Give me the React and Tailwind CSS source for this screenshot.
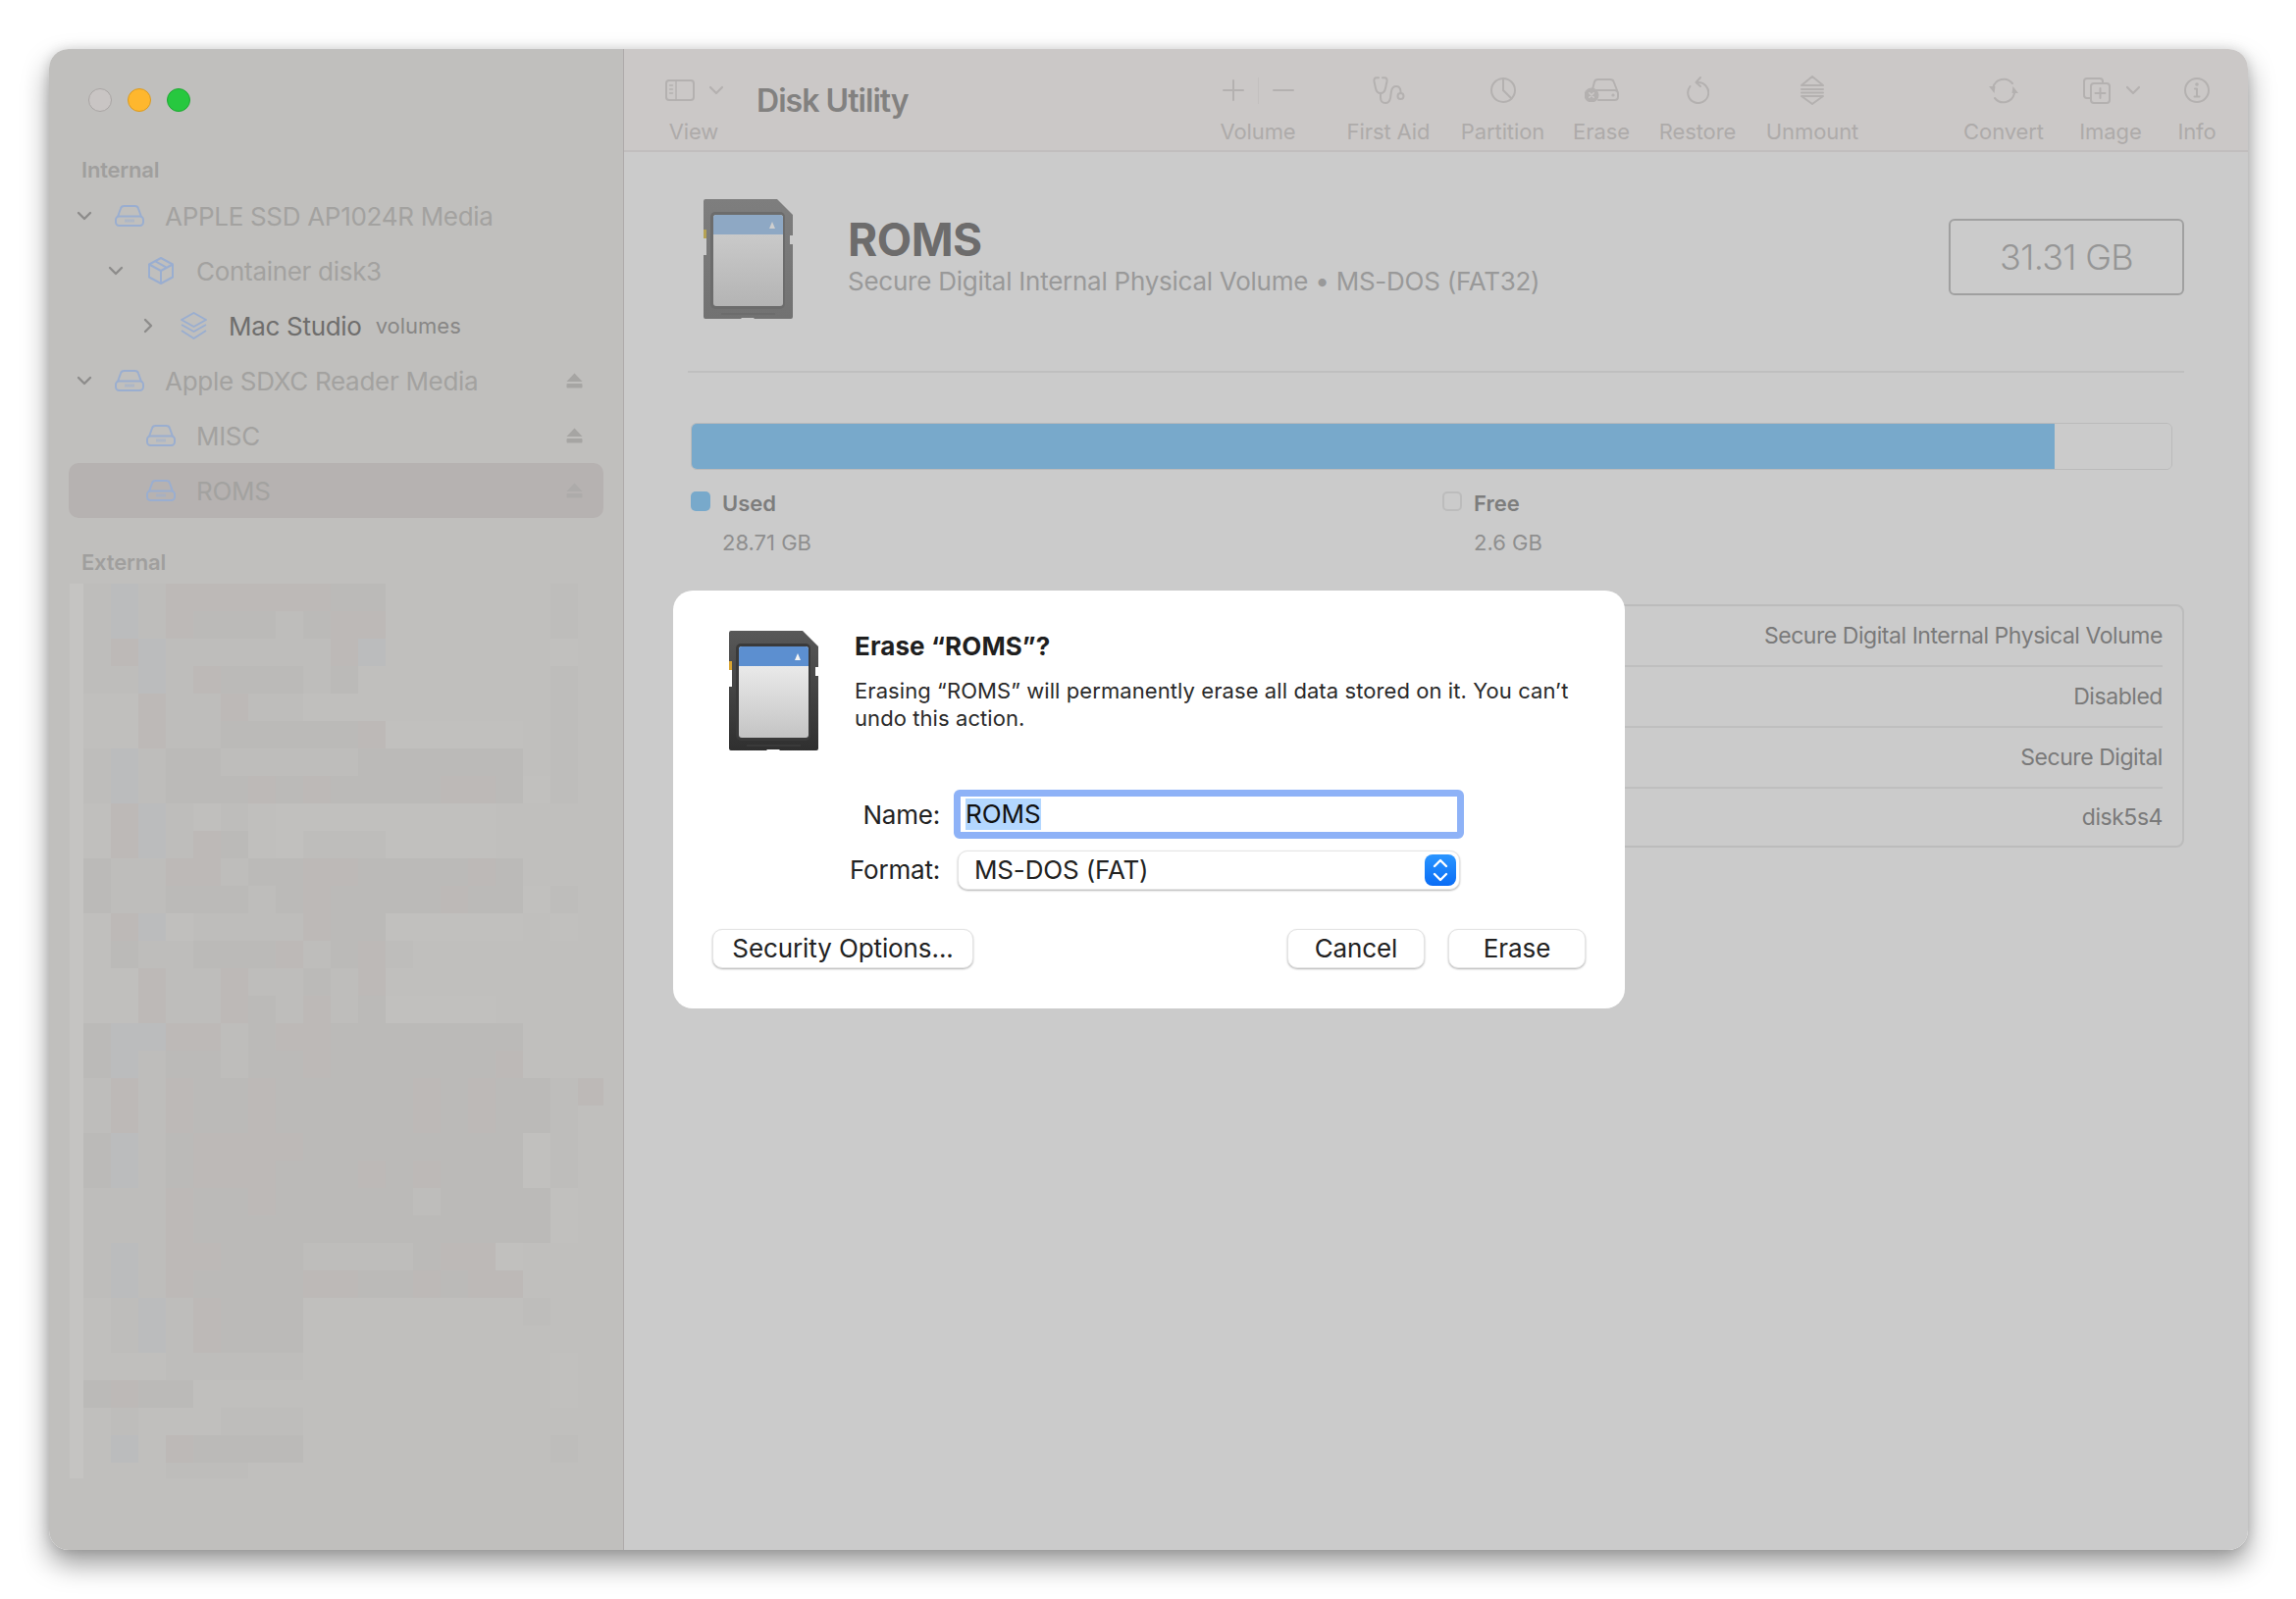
import React from 'react';

const shades = {
  '.': 'bg-[#c0bfbd]',
  d: 'bg-[#bebdbb]',
  D: 'bg-[#bbbab8]',
  p: 'bg-[#bdb9b7]',
  b: 'bg-[#bbbcbd]',
  l: 'bg-[#c1c0be]',
};

// blurred "External" list, one string per row
const mosaic = [
  'dbdppppppDD......d.',
  'dbdpDDDdDpp......d.',
  'dpbddddddpb......l.',
  'ddbdpDDDdD.......d.',
  '..pddpdd.........d.',
  '..pddDDDDDplllll.d.',
  'dbdDDdddddDDDDDD.d.',
  'dbdDDDpDpDDDDppDld.',
  '.pbd.d.llllllll....',
  '.pbdpD.ldddllll....',
  'DddppdDDppDDDDpD...',
  'DddDDDdDpDDDDpDDld.',
  '.pb.ddddpDDlllll.l.',
  '.DddDDDpdDpd.......',
  '..pddpddDdp........',
  '..pddpDdpdDllll....',
  'DbbppdDppDDDDDDD...',
  'DbdDDdDDpDDDDDDp...',
  'dpdpDDpDDDDDpDpDDdp',
  'dpdpDDpDDDDDpDpDDd.',
  'DbdDppppDDDDDDDDld.',
  'DbdDpppDDDpDpDDDld.',
  'dddpDDpDDDDDdDDDDl.',
  'dddpDDDDDDDDDDDDDl.',
  'dbdppDDDddddDppl...',
  'dbdpDDDDppDDpDpp...',
  '.dbdpDDD........d..',
  '.dbdpDDD...........',
  '...ddddd.........l.',
  'DpDD.............l.',
  '.d...ddd...........',
  '.b.pDDDD.........d.',
  '...ddd.............',
];

const Chevron = ({ open }) => (
  <svg width="16" height="16" viewBox="0 0 16 16" fill="none" stroke="#8d8c8b" strokeWidth="2.4" strokeLinecap="round" strokeLinejoin="round">
    {open ? <path d="M2 5l6 6 6-6" /> : <path d="M5 2l6 6-6 6" />}
  </svg>
);

const DriveIcon = () => (
  <svg width="30" height="22" viewBox="0 0 30 22" fill="none" stroke="#9aaed0" strokeWidth="2">
    <path d="M3 12L6 3.5Q6.7 1 9.5 1H20.5Q23.3 1 24 3.5L27 12" />
    <rect x="1" y="11.5" width="28" height="9.5" rx="3.5" />
    <path d="M11 14.5v3M13 14.5v3M15 14.5v3M17 14.5v3M19 14.5v3" strokeWidth="1" />
  </svg>
);

const CubeIcon = () => (
  <svg width="26" height="28" viewBox="0 0 26 28" fill="none" stroke="#9aaed0" strokeWidth="2" strokeLinejoin="round">
    <path d="M13 1L25 7.5V20.5L13 27L1 20.5V7.5Z" />
    <path d="M1 7.5L13 14L25 7.5M13 14V27M7 4.2L19 10.8" />
  </svg>
);

const LayersIcon = () => (
  <svg width="27" height="28" viewBox="0 0 27 28" fill="none" stroke="#9aaed0" strokeWidth="2" strokeLinejoin="round">
    <path d="M13.5 1L26 8L13.5 15L1 8Z" />
    <path d="M1 13L13.5 20L26 13" />
    <path d="M1 19L13.5 27L26 19" />
  </svg>
);

const EjectIcon = ({ dim }) => (
  <svg width="17" height="16" viewBox="0 0 17 16" fill={dim ? '#adabaa' : '#a6a5a3'}>
    <path d="M8.5 0.5L16.5 9H0.5Z" />
    <rect x="0.5" y="11" width="16" height="4.5" rx="1" />
  </svg>
);

const Row = ({ level, chevron, icon, name, extra, eject, selected }) => {
  const indent = ['pl-[8px]', 'pl-[40px]', 'pl-[73px]'][level];
  return (
    <div className={`flex items-center h-[56px] rounded-[10px] ${indent} ${selected ? 'bg-[#b6b2b1]' : ''}`}>
      <div className="w-[39px] flex">{chevron && <Chevron open={chevron === 'open'} />}</div>
      <div className="w-[30px] mr-[21px] flex justify-center">{icon}</div>
      <span className={`text-[26px] tracking-[-0.3px] ${extra ? 'text-[#6f6e6d]' : 'text-[#a3a2a0]'}`}>{name}</span>
      {extra && <span className="ml-[14px] text-[22px] text-[#888786]">{extra}</span>}
      {eject && (
        <div className="ml-auto mr-[21px] flex">
          <EjectIcon dim={selected} />
        </div>
      )}
    </div>
  );
};

const Sidebar = () => (
  <div className="w-[586px] shrink-0 bg-[#c0bfbd] border-r border-[#aeaaaa] pt-[40px] px-[20px]">
    <div className="flex items-center gap-[16px] pl-[20px] mb-[45px]">
      <div className="w-[24px] h-[24px] rounded-full bg-[#c9c5c4] border border-[#a9a5a4]" />
      <div className="w-[24px] h-[24px] rounded-full bg-[#feb72e] border border-[#d99a22]" />
      <div className="w-[24px] h-[24px] rounded-full bg-[#27c83f] border border-[#1fa833]" />
    </div>
    <div className="h-[28px] leading-[28px] pl-[13px] mb-[5px] text-[22px] font-semibold tracking-[-0.2px] text-[#a09f9e]">Internal</div>
    <Row level={0} chevron="open" icon={<DriveIcon />} name="APPLE SSD AP1024R Media" />
    <Row level={1} chevron="open" icon={<CubeIcon />} name="Container disk3" />
    <Row level={2} chevron="closed" icon={<LayersIcon />} name="Mac Studio" extra="volumes" />
    <Row level={0} chevron="open" icon={<DriveIcon />} name="Apple SDXC Reader Media" eject />
    <Row level={1} icon={<DriveIcon />} name="MISC" eject />
    <Row level={1} icon={<DriveIcon />} name="ROMS" eject selected />
    <div className="h-[28px] leading-[28px] pl-[13px] mt-[31px] mb-[8px] text-[22px] font-semibold tracking-[-0.2px] text-[#a09f9e]">External</div>
    <div className="ml-[1px] h-[912px] overflow-hidden grid grid-cols-[14px_repeat(19,28px)] auto-rows-[28px]">
      {mosaic.map((row, r) => (
        <React.Fragment key={r}>
          <div className="bg-[#c5c4c2]" />
          {row.split('').map((c, i) => (
            <div key={i} className={shades[c]} />
          ))}
        </React.Fragment>
      ))}
    </div>
  </div>
);

const ToolIcon = ({ w, h, vb, children }) => (
  <svg width={w} height={h} viewBox={vb} fill="none" stroke="#b4b1b0" strokeWidth="2" strokeLinecap="round" strokeLinejoin="round">
    {children}
  </svg>
);

const SmallChevron = () => (
  <svg width="16" height="10" viewBox="0 0 16 10" fill="none" stroke="#b4b1b0" strokeWidth="2.2" strokeLinecap="round" strokeLinejoin="round">
    <path d="M2 2l6 6 6-6" />
  </svg>
);

const Tool = ({ width, label, children }) => (
  <div className={`flex flex-col items-center ${width}`}>
    <div className="h-[36px] flex items-center">{children}</div>
    <div className="mt-[10px] h-[28px] leading-[28px] text-[22px] tracking-[-0.1px] text-[#aeabaa]">{label}</div>
  </div>
);

const Toolbar = () => (
  <div className="h-[105px] shrink-0 bg-[#cbc8c7] border-b-2 border-[#c1bebe] flex items-start pt-[24px] pl-[32px] pr-[18px]">
    <Tool width="w-[78px]" label="View">
      <div className="flex items-center gap-[14px] ml-[2px]">
        <ToolIcon w={30} h={22} vb="0 0 30 22">
          <rect x="1" y="1" width="28" height="20" rx="3" />
          <path d="M11 1v20M4.5 6h3M4.5 10h3M4.5 14h3" strokeWidth="1.4" />
        </ToolIcon>
        <SmallChevron />
      </div>
    </Tool>
    <div className="mt-[13px] ml-[25px] text-[32px] leading-[32px] font-semibold tracking-[-0.95px] text-[#828180]">Disk Utility</div>
    <div className="flex-1" />
    <Tool width="w-[132px]" label="Volume">
      <div className="flex items-center gap-[14px]">
        <ToolIcon w={22} h={22} vb="0 0 22 22">
          <path d="M11 1v20M1 11h20" />
        </ToolIcon>
        <div className="w-[1px] h-[27px] bg-[#c3c0bf]" />
        <ToolIcon w={22} h={22} vb="0 0 22 22">
          <path d="M1 11h20" />
        </ToolIcon>
      </div>
    </Tool>
    <Tool width="w-[134px]" label="First Aid">
      <ToolIcon w={33} h={28} vb="0 0 33 28">
        <path d="M6 1.2H4Q1 1.2 1.5 5L3 12Q4 17 8 17Q12 17 13 12L14.5 5Q15 1.2 12 1.2H10" />
        <path d="M8 17V21.5Q8 27 13 27Q17 27 18 22L19 15Q20 10 24 10Q28 10 28.5 15V17" />
        <circle cx="28.5" cy="20" r="3" />
      </ToolIcon>
    </Tool>
    <Tool width="w-[99px]" label="Partition">
      <ToolIcon w={26} h={26} vb="0 0 26 26">
        <circle cx="13" cy="13" r="12" />
        <path d="M13 1V13L21.5 21.5" />
      </ToolIcon>
    </Tool>
    <Tool width="w-[102px]" label="Erase">
      <svg width="35" height="24" viewBox="0 0 35 24" fill="none" stroke="#b4b1b0" strokeWidth="2" strokeLinecap="round" strokeLinejoin="round">
        <path d="M8 11L10 3.5Q10.7 1 13.5 1H26Q29 1 29.7 3.5L33 12" />
        <path d="M12 12H30.5Q34 12 34 15.5V18.5Q34 22 30.5 22H14" />
        <circle cx="29" cy="17" r="0.6" />
        <circle cx="7" cy="17" r="6.5" fill="#b4b1b0" />
        <path d="M4.8 14.8l4.4 4.4M9.2 14.8l-4.4 4.4" stroke="#cbc8c7" strokeWidth="1.6" />
      </svg>
    </Tool>
    <Tool width="w-[94px]" label="Restore">
      <ToolIcon w={23} h={28} vb="0 0 23 28">
        <path d="M11.5 6A10.5 10.5 0 1 1 3.5 10" />
        <path d="M14 1L9.5 6L14 10" />
      </ToolIcon>
    </Tool>
    <Tool width="w-[140px]" label="Unmount">
      <ToolIcon w={24} h={30} vb="0 0 24 30">
        <path d="M12 1L23 10H1Z" />
        <path d="M1 14H23M1 17.5H23" />
        <path d="M1 21H23L12 29Z" />
      </ToolIcon>
    </Tool>
    <div className="w-[70px]" />
    <Tool width="w-[110px]" label="Convert">
      <svg width="32" height="27" viewBox="0 0 32 27" fill="none" stroke="#b4b1b0" strokeWidth="2" strokeLinecap="round">
        <path d="M5 11A11.5 12 0 0 1 25 6" />
        <path d="M27 16A11.5 12 0 0 1 7 21" />
        <path d="M25.5 10L31 17H24.5Z M6.5 17L1 10H7.5Z" transform="translate(0 -1)" fill="#b4b1b0" stroke="none" />
      </svg>
    </Tool>
    <Tool width="w-[108px]" label="Image">
      <div className="flex items-center gap-[15px] ml-[3px]">
        <ToolIcon w={28} h={27} vb="0 0 28 27">
          <rect x="1" y="1" width="19" height="20" rx="3" />
          <rect x="8" y="6" width="19" height="20" rx="3" fill="#cbc8c7" />
          <path d="M17.5 11v10M12.5 16h10" />
        </ToolIcon>
        <SmallChevron />
      </div>
    </Tool>
    <Tool width="w-[68px]" label="Info">
      <ToolIcon w={26} h={26} vb="0 0 26 26">
        <circle cx="13" cy="13" r="12" />
        <path d="M13 11.5V19.5M10.5 19.5h5M11 11.5h2" />
        <circle cx="13" cy="7" r="0.8" />
      </ToolIcon>
    </Tool>
  </div>
);

const SdCard = ({ id, body, bodyEnd, bevel, blue, top, bottom, gold }) => (
  <svg width="91" height="122" viewBox="0 0 91 122">
    <defs>
      <linearGradient id={`${id}-body`} x1="0" y1="0" x2="0" y2="1">
        <stop offset="0" stopColor={body} />
        <stop offset="1" stopColor={bodyEnd} />
      </linearGradient>
      <linearGradient id={`${id}-panel`} x1="0" y1="0" x2="0" y2="1">
        <stop offset="0" stopColor={top} />
        <stop offset="1" stopColor={bottom} />
      </linearGradient>
    </defs>
    <path
      d="M2 0H75L91 16V37H88V46H91V120Q91 122 89 122H52L51 121H39L38 122H2Q0 122 0 120V57H3V40H0V2Q0 0 2 0Z"
      fill={`url(#${id}-body)`}
    />
    <rect x="0" y="31" width="3" height="9" fill={gold} />
    <rect x="7" y="13" width="76" height="99" rx="5" fill={bevel} />
    <rect x="10" y="16" width="71" height="93" rx="3" fill={`url(#${id}-panel)`} />
    <path d="M10 36V19Q10 16 13 16H78Q81 16 81 19V36Z" fill={blue} />
    <path d="M70 23L73 30H67Z" fill={top} />
    <rect x="18" y="116" width="55" height="2" fill={bevel} />
  </svg>
);

const Legend = ({ swatch, label, value, width }) => (
  <div className={width}>
    <div className="flex items-center h-[28px]">
      <div className={`w-[20px] h-[20px] rounded-[5px] -mt-[4px] ${swatch}`} />
      <span className="ml-[12px] text-[22px] font-semibold text-[#7d7d7d]">{label}</span>
    </div>
    <div className="mt-[12px] ml-[32px] h-[28px] leading-[28px] text-[22px] text-[#8f8f8f]">{value}</div>
  </div>
);

const Content = () => (
  <div className="flex-1 bg-[#cbcbcb] pl-[65px] pr-[65px] pt-[48px]">
    <div className="flex items-center h-[122px]">
      <div className="ml-[16px] flex">
        <SdCard id="head" body="#7e7e7e" bodyEnd="#727272" bevel="#6c6c6c" blue="#8ea8c4" top="#cfcfcf" bottom="#b4b4b4" gold="#b5a254" />
      </div>
      <div className="ml-[56px] -mt-[8px]">
        <div className="text-[46px] leading-[52px] font-bold tracking-[-0.5px] text-[#6d6c6c]">ROMS</div>
        <div className="mt-[1px] text-[26px] leading-[32px] tracking-[-0.25px] text-[#999999]">Secure Digital Internal Physical Volume • MS-DOS (FAT32)</div>
      </div>
      <div className="ml-auto -mt-[5px] w-[240px] h-[78px] flex items-center justify-center rounded-[6px] border-2 border-[#a0a0a0] text-[36px] font-light tracking-[-0.7px] text-[#969696]">31.31 GB</div>
    </div>
    <div className="mt-[53px] h-[2px] bg-[#bfbfbf]" />
    <div className="mt-[51px] ml-[3px] mr-[12px] h-[48px] flex rounded-[6px] overflow-hidden border border-[#bababa]">
      <div className="w-[1389px] bg-[#78a9cb]" />
      <div className="flex-1 bg-[#cbcbcb]" />
    </div>
    <div className="mt-[20px] ml-[3px] flex">
      <Legend width="w-[766px]" swatch="bg-[#78a9cb]" label="Used" value="28.71 GB" />
      <Legend width="w-[300px]" swatch="border-2 border-[#bcbcbc]" label="Free" value="2.6 GB" />
    </div>
    <div className="mt-[49px] h-[248px] rounded-[8px] border-2 border-[#bcbcbc] text-[23px] tracking-[-0.45px] text-[#7a7a7a]">
      <div className="h-[62px] ml-[20px] mr-[20px] border-b-2 border-[#bfbfbf] flex items-center justify-end">Secure Digital Internal Physical Volume</div>
      <div className="h-[62px] ml-[20px] mr-[20px] border-b-2 border-[#bfbfbf] flex items-center justify-end">Disabled</div>
      <div className="h-[62px] ml-[20px] mr-[20px] border-b-2 border-[#bfbfbf] flex items-center justify-end">Secure Digital</div>
      <div className="h-[58px] ml-[20px] mr-[20px] flex items-center justify-end">disk5s4</div>
    </div>
  </div>
);

const Button = ({ width, children }) => (
  <button className={`${width} h-[40px] rounded-[10px] bg-white border border-[#e4e4e4] shadow-[0_1px_2px_rgba(0,0,0,0.3)] text-[26px] leading-[36px] tracking-[-0.1px] text-[#222222]`}>
    {children}
  </button>
);

const Dialog = () => (
  <div className="absolute left-[636px] top-[552px] w-[970px] h-[426px] rounded-[20px] bg-white pt-[41px] px-[40px]">
    <div className="flex items-start ml-[17px]">
      <div className="flex shrink-0">
        <SdCard id="dlg" body="#585858" bodyEnd="#2f2f2f" bevel="#3a3a3a" blue="#5c8fd0" top="#f4f4f4" bottom="#c4c4c4" gold="#d9a534" />
      </div>
      <div className="ml-[37px]">
        <div className="text-[26px] leading-[32px] font-bold tracking-[0.1px] text-[#1f1f1f]">Erase “ROMS”?</div>
        <div className="mt-[15px] w-[740px] text-[22px] leading-[28px] tracking-[0.08px] text-[#2a2a2a]">
          Erasing “ROMS” will permanently erase all data stored on it. You can’t undo this action.
        </div>
      </div>
    </div>
    <div className="mt-[40px] flex items-center h-[50px]">
      <div className="w-[232px] text-right text-[26px] tracking-[-0.2px] text-[#222222]">Name:</div>
      <div className="ml-[14px] w-[520px] h-[50px] rounded-[6px] border-[7px] border-[#8eb2f7] bg-white flex items-center pl-[5px] text-[26px] text-[#111111]">
        <span className="bg-[#b3d7ff] h-[32px] leading-[32px]">ROMS</span>
      </div>
    </div>
    <div className="mt-[12px] flex items-center h-[40px]">
      <div className="w-[232px] text-right text-[26px] tracking-[-0.2px] text-[#222222] -mt-[1px]">Format:</div>
      <div className="relative ml-[18px] w-[512px] h-[40px] rounded-[10px] bg-white border border-[#e4e4e4] shadow-[0_1px_2px_rgba(0,0,0,0.3)] flex items-center pl-[16px] pb-[1px] text-[26px] tracking-[-0.15px] text-[#222222]">
        MS-DOS (FAT)
        <div className="absolute right-[3px] top-[3px] w-[32px] h-[32px] rounded-[8px] bg-gradient-to-b from-[#2a95ff] to-[#0a6cf5] flex items-center justify-center">
          <svg width="16" height="24" viewBox="0 0 16 24" fill="none" stroke="#ffffff" strokeWidth="2.4" strokeLinecap="round" strokeLinejoin="round">
            <path d="M2 8l6-6 6 6M2 16l6 6 6-6" />
          </svg>
        </div>
      </div>
    </div>
    <div className="mt-[40px] flex">
      <Button width="w-[266px]">Security Options...</Button>
      <div className="flex-1" />
      <Button width="w-[140px]">Cancel</Button>
      <div className="w-[24px]" />
      <Button width="w-[140px]">Erase</Button>
    </div>
  </div>
);

export default function App() {
  return (
    <div className="w-[2340px] h-[1630px] bg-white pt-[50px] pl-[50px] font-[Inter,sans-serif]">
      <div className="relative w-[2241px] h-[1530px] flex rounded-[20px] shadow-[0_14px_28px_rgba(0,0,0,0.4),0_0_12px_rgba(0,0,0,0.12)]">
        <div className="flex w-full rounded-[20px] overflow-hidden">
          <Sidebar />
          <div className="flex-1 flex flex-col">
            <Toolbar />
            <Content />
          </div>
        </div>
        <Dialog />
      </div>
    </div>
  );
}
